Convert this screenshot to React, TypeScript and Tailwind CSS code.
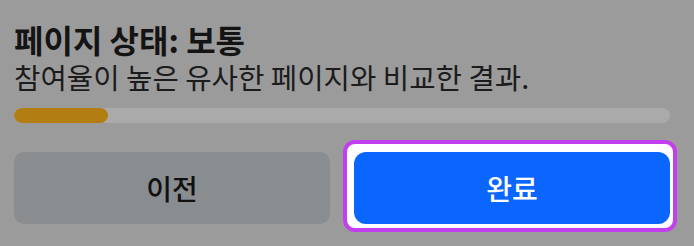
import React from "react"

const font = { fontFamily: '"Noto Sans CJK KR", "Noto Sans", sans-serif' }

export default function App() {
  const progress = 14.3

  return (
    <div className="w-[694px] h-[246px] bg-[#9b9b9b] overflow-hidden" style={font}>
      <div className="pl-[14px] pr-[24px] pt-[20px]">
        <h2 className="text-[32px] leading-[38px] font-bold text-[#141414]">페이지 상태: 보통</h2>
        <p className="text-[28.7px] leading-[38px] text-[#1c1c1c]">참여율이 높은 유사한 페이지와 비교한 결과.</p>

        <div className="mt-[12px] h-[15px] w-full rounded-full bg-[#aaaaaa] overflow-hidden">
          <div className="h-full rounded-full bg-[#b27e13]" style={{ width: `${progress}%` }} />
        </div>

        <div className="mt-[29px] grid grid-cols-2 gap-[24px]">
          <button className="h-[72px] rounded-[10px] bg-[#8a8d90] text-[28px] font-medium text-[#111111]">
            이전
          </button>
          <div className="relative">
            <span className="absolute -top-[12px] -bottom-[8px] -left-[11px] -right-[7px] rounded-[12px] border-[4px] border-[#c23ff0] bg-white" />
            <button className="relative h-[72px] w-full rounded-[12px] bg-[#0a66ff] text-[28px] font-medium text-white">
              완료
            </button>
          </div>
        </div>
      </div>
    </div>
  )
}
